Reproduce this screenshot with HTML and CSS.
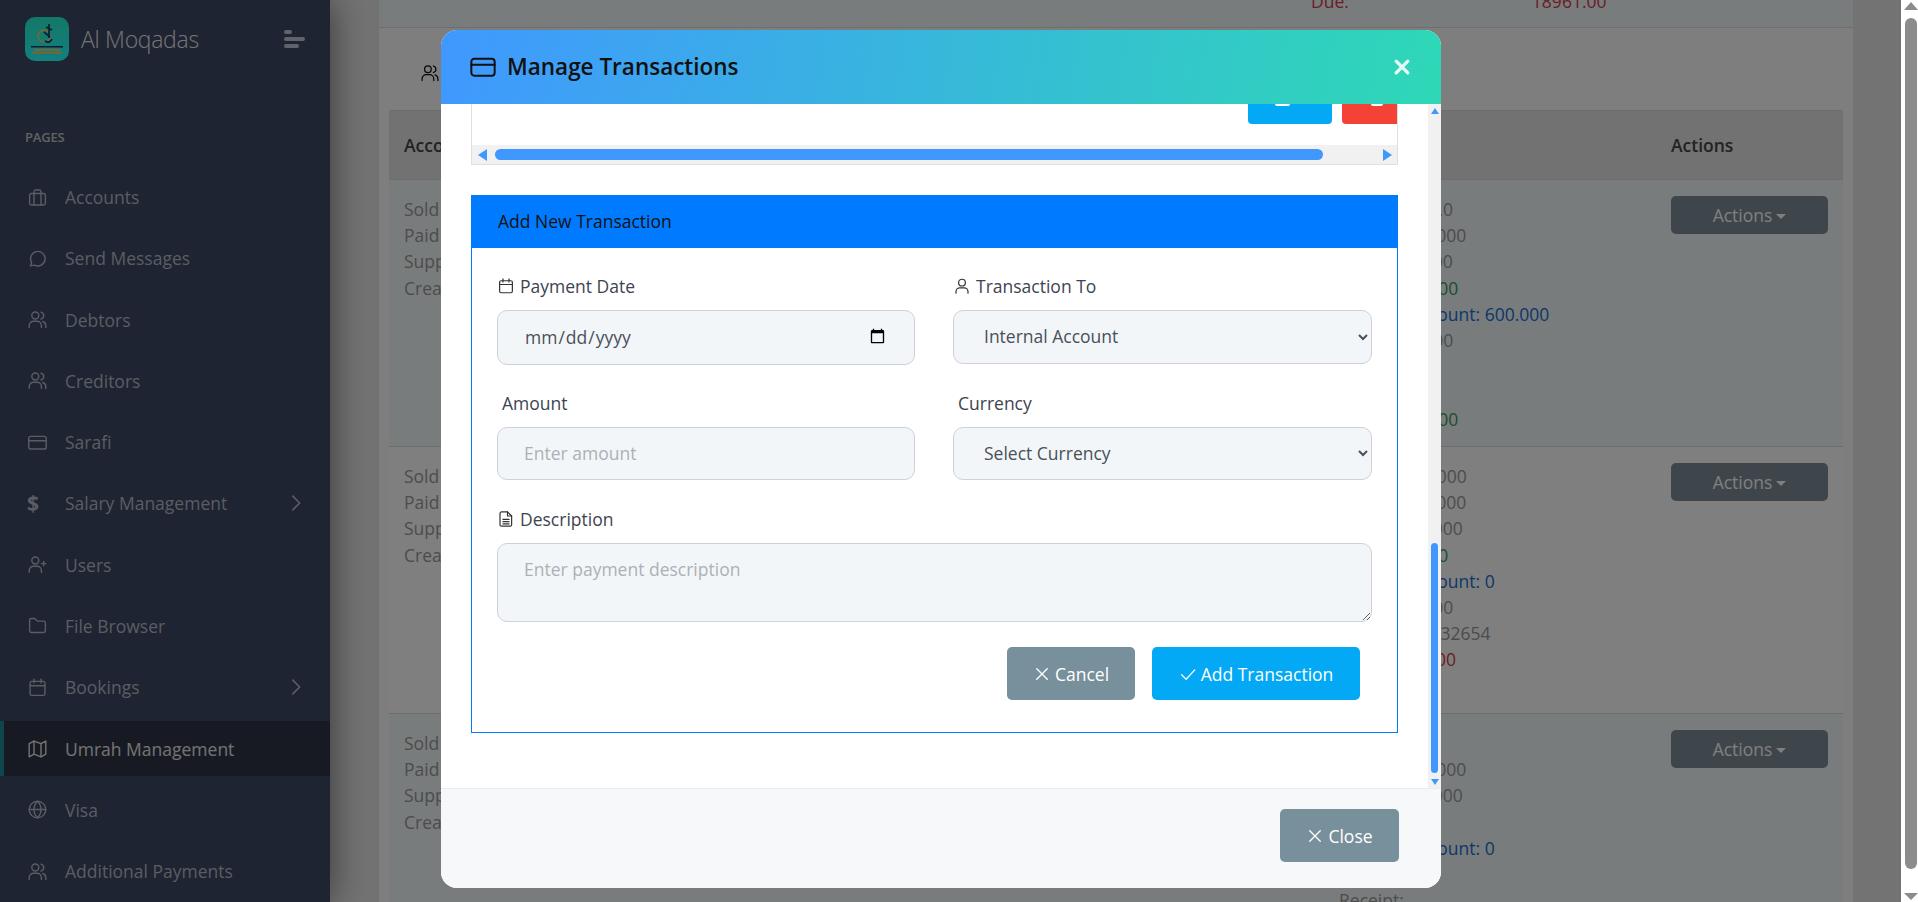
FILE: index.html
```html
<!DOCTYPE html>
<html lang="en">
<head>
  <meta charset="UTF-8">
  <title>Al Moqadas - Umrah Management</title>
  <link rel="stylesheet" href="styles.css">
</head>
<body>

  <!-- icon sprite -->
  <svg class="sprite" xmlns="http://www.w3.org/2000/svg">
    <defs>
      <symbol id="i-briefcase" viewBox="0 0 24 24"><rect x="3" y="7.5" width="18" height="13" rx="2"/><path d="M8 20.5V5.5a2 2 0 0 1 2-2h4a2 2 0 0 1 2 2v15"/></symbol>
      <symbol id="i-chat" viewBox="0 0 24 24"><path d="M4 20.5l1.3-4A8.3 8.3 0 1 1 8.6 19.6z"/></symbol>
      <symbol id="i-users" viewBox="0 0 24 24"><circle cx="9.5" cy="7.5" r="4"/><path d="M2.5 21v-2a5 5 0 0 1 5-5h4a5 5 0 0 1 5 5v2"/><path d="M16 3.6a4 4 0 0 1 0 7.8"/><path d="M21.5 21v-2a5 5 0 0 0-3.5-4.7"/></symbol>
      <symbol id="i-card" viewBox="0 0 24 24"><rect x="2" y="5" width="20" height="14.5" rx="2.5"/><path d="M2 10h20"/></symbol>
      <symbol id="i-user-plus" viewBox="0 0 24 24"><circle cx="9.5" cy="7.5" r="4"/><path d="M2.5 21v-2a5 5 0 0 1 5-5h4a5 5 0 0 1 5 5v2"/><path d="M19 8.500v5M16.500 11h5"/></symbol>
      <symbol id="i-folder" viewBox="0 0 24 24"><path d="M3 6a2 2 0 0 1 2-2h4l3 3h7a2 2 0 0 1 2 2v9a2 2 0 0 1-2 2H5a2 2 0 0 1-2-2z"/></symbol>
      <symbol id="i-calendar" viewBox="0 0 24 24"><rect x="3.500" y="5" width="17" height="16" rx="2"/><path d="M3.500 10h17M8 2.500v4M16 2.500v4"/></symbol>
      <symbol id="i-map" viewBox="0 0 24 24"><path d="M2.500 6.500l5.500-3 8 3 5.500-3v15l-5.500 3-8-3-5.500 3z"/><path d="M8 3.500v15M16 6.500v15"/></symbol>
      <symbol id="i-globe" viewBox="0 0 24 24"><circle cx="12" cy="12" r="9.500"/><path d="M2.500 12h19M12 2.500c3 3 4 6 4 9.500s-1 6.500-4 9.500c-3-3-4-6-4-9.500s1-6.500 4-9.500z"/></symbol>
      <symbol id="i-user" viewBox="0 0 24 24"><circle cx="12" cy="7.500" r="4.500"/><path d="M4 21.500v-2a5 5 0 0 1 5-5h6a5 5 0 0 1 5 5v2"/></symbol>
      <symbol id="i-file" viewBox="0 0 24 24"><path d="M6 2.500h8l5.500 5.500v11.500a2 2 0 0 1-2 2H6a2 2 0 0 1-2-2v-15a2 2 0 0 1 2-2z"/><path d="M14 2.500V8h5.500M8 12.500h8M8 15.500h8M8 18.500h8"/></symbol>
      <symbol id="i-x" viewBox="0 0 24 24"><path d="M5 5l14 14M19 5L5 19"/></symbol>
      <symbol id="i-check" viewBox="0 0 24 24"><path d="M3.500 13l6 6L21 6.500"/></symbol>
      <symbol id="i-chevron" viewBox="0 0 24 24"><path d="M8.500 4.500L16 12l-7.500 7.500"/></symbol>
    </defs>
  </svg>

  <div class="layout">
    <aside class="sidebar">
      <div class="brand">
        <svg class="logo" viewBox="0 0 44 44">
          <defs>
            <linearGradient id="logoBg" x1="0" y1="0" x2="0" y2="1">
              <stop offset="0" stop-color="#26f0cc"/>
              <stop offset="1" stop-color="#26ffff"/>
            </linearGradient>
          </defs>
          <rect width="44" height="44" rx="10" fill="url(#logoBg)"/>
          <circle cx="19" cy="19" r="6" fill="none" stroke="#ffc860" stroke-width="1.500"/>
          <path d="M24 7v14M21 10l6 3M19 15l6 5M20 24c3 2 6 1 7-2" stroke="#173a66" stroke-width="1.700" fill="none"/>
          <rect x="6" y="29" width="32" height="1.500" fill="#173a66"/>
          <rect x="9" y="32" width="26" height="2" fill="#ffc860"/>
          <rect x="7" y="35" width="30" height="1.500" fill="#ffc860"/>
        </svg>
        <span class="brand-name">Al Moqadas</span>
        <div class="toggler"><i class="bar-a"></i><i class="bar-b"></i><i class="bar-c"></i></div>
      </div>
      <div class="nav-title">PAGES</div>
      <nav class="nav">
        <a class="nav-item"><svg class="ico nav-ico"><use href="#i-briefcase"/></svg>Accounts</a>
        <a class="nav-item"><svg class="ico nav-ico"><use href="#i-chat"/></svg>Send Messages</a>
        <a class="nav-item"><svg class="ico nav-ico"><use href="#i-users"/></svg>Debtors</a>
        <a class="nav-item"><svg class="ico nav-ico"><use href="#i-users"/></svg>Creditors</a>
        <a class="nav-item"><svg class="ico nav-ico"><use href="#i-card"/></svg>Sarafi</a>
        <a class="nav-item"><span class="nav-ico dollar">$</span>Salary Management<svg class="ico chev"><use href="#i-chevron"/></svg></a>
        <a class="nav-item"><svg class="ico nav-ico"><use href="#i-user-plus"/></svg>Users</a>
        <a class="nav-item"><svg class="ico nav-ico"><use href="#i-folder"/></svg>File Browser</a>
        <a class="nav-item"><svg class="ico nav-ico"><use href="#i-calendar"/></svg>Bookings<svg class="ico chev"><use href="#i-chevron"/></svg></a>
        <a class="nav-item active"><svg class="ico nav-ico"><use href="#i-map"/></svg>Umrah Management</a>
        <a class="nav-item"><svg class="ico nav-ico"><use href="#i-globe"/></svg>Visa</a>
        <a class="nav-item"><svg class="ico nav-ico"><use href="#i-users"/></svg>Additional Payments</a>
      </nav>
    </aside>

    <main class="main">
      <div class="summary">
        <span class="due-label">Due:</span>
        <span class="due-value">18961.00</span>
      </div>
      <div class="panel">
        <div class="tabs"><svg class="ico tab-ico"><use href="#i-users"/></svg></div>
        <div class="tbl-head">
          <div class="col-a">Account</div>
          <div class="col-c">Actions</div>
        </div>

        <div class="tbl-row striped">
          <div class="col-a">Sold By: Ali<br>Paid By: Cash<br>Supplier: Ahmad<br>Created: 2024</div>
          <div class="col-b">
            <div>Price: 12000.0</div>
            <div>Sale: 12000.000</div>
            <div>Costs: 110000</div>
            <div class="green">Paid: 60000.00</div>
            <div class="blue">Pending Amount: 600.000</div>
            <div>Total: 1200.00</div>
            <div>&nbsp;</div>
            <div>&nbsp;</div>
            <div class="green">Paid: 60000.00</div>
          </div>
          <div class="col-c"><button class="btn-actions">Actions</button></div>
        </div>

        <div class="tbl-row">
          <div class="col-a">Sold By: Ali<br>Paid By: Cash<br>Supplier: Ahmad<br>Created: 2024</div>
          <div class="col-b">
            <div>Prices: 1200000</div>
            <div>Sale: 12000.000</div>
            <div>Costs: 1100000</div>
            <div class="green">Paid: 60000.0</div>
            <div class="blue">Pending Amount: 0</div>
            <div>Total: 1200.00</div>
            <div>Phone: 079332654</div>
            <div class="red">Due: 12000.00</div>
          </div>
          <div class="col-c"><button class="btn-actions">Actions</button></div>
        </div>

        <div class="tbl-row striped">
          <div class="col-a">Sold By: Ali<br>Paid By: Cash<br>Supplier: Ahmad<br>Created: 2024</div>
          <div class="col-b">
            <div>&nbsp;</div>
            <div>Sale: 12000.000</div>
            <div>Costs: 1100000</div>
            <div>&nbsp;</div>
            <div class="blue">Pending Amount: 0</div>
            <div>&nbsp;</div>
            <div>Receipt:</div>
          </div>
          <div class="col-c"><button class="btn-actions">Actions</button></div>
        </div>
      </div>
    </main>
  </div>

  <div class="backdrop"></div>

  <div class="page-scroll">
    <i class="arrow-up"></i>
    <div class="page-thumb"></div>
    <i class="arrow-down"></i>
  </div>

  <!-- Manage Transactions modal -->
  <div class="modal">
    <div class="modal-header">
      <svg class="ico title-ico"><use href="#i-card"/></svg>
      <h5 class="modal-title">Manage Transactions</h5>
      <svg class="ico modal-close"><use href="#i-x"/></svg>
    </div>

    <div class="modal-middle">
      <div class="modal-body">
        <div class="table-wrap">
          <div class="table-btns">
            <span class="mini-btn info"><i></i></span>
            <span class="mini-btn danger"><i></i></span>
          </div>
          <div class="hscroll">
            <i class="arrow-left"></i>
            <div class="hthumb"></div>
            <i class="arrow-right"></i>
          </div>
        </div>

        <div class="card">
          <div class="card-header">Add New Transaction</div>
          <form class="card-body">
            <div class="field row-one">
              <label><svg class="ico lbl-ico"><use href="#i-calendar"/></svg>Payment Date</label>
              <input class="control date-control" type="date">
            </div>
            <div class="field row-one">
              <label><svg class="ico lbl-ico"><use href="#i-user"/></svg>Transaction To</label>
              <select class="control"><option>Internal Account</option></select>
            </div>
            <div class="field">
              <label class="plain">Amount</label>
              <input class="control short" type="text" placeholder="Enter amount">
            </div>
            <div class="field">
              <label class="plain">Currency</label>
              <select class="control short"><option>Select Currency</option></select>
            </div>
            <div class="field wide">
              <label><svg class="ico lbl-ico"><use href="#i-file"/></svg>Description</label>
              <textarea class="control" placeholder="Enter payment description"></textarea>
            </div>
            <div class="form-actions">
              <button type="button" class="btn btn-grey"><svg class="ico btn-ico"><use href="#i-x"/></svg>Cancel</button>
              <button type="button" class="btn btn-cyan"><svg class="ico btn-ico"><use href="#i-check"/></svg>Add Transaction</button>
            </div>
          </form>
        </div>
      </div>

      <div class="modal-scroll">
        <i class="arrow-up"></i>
        <div class="modal-track"><div class="modal-thumb"></div></div>
        <i class="arrow-down"></i>
      </div>
    </div>

    <div class="modal-footer">
      <button type="button" class="btn btn-grey btn-close"><svg class="ico btn-ico"><use href="#i-x"/></svg>Close</button>
    </div>
  </div>

</body>
</html>
```

FILE: styles.css
```css
* {
  box-sizing: border-box;
}

html, body {
  margin: 0;
  height: 902px;
  overflow: hidden;
}

body {
  font-family: "Open Sans", sans-serif;
  font-size: 17.5px;
  color: #888;
  background: #e6e6e6;
  position: relative;
}

.sprite {
  width: 0;
  height: 0;
  position: absolute;
}

.ico {
  fill: none;
  stroke: currentColor;
  stroke-width: 1.6;
  stroke-linecap: round;
  stroke-linejoin: round;
  flex-shrink: 0;
}

/* ---- page behind the modal ---- */
.layout {
  display: flex;
  width: 1901px;
  height: 902px;
  overflow: hidden;
}

.sidebar {
  width: 330px;
  flex-shrink: 0;
  background: #3c4864;
  box-shadow: 0 0 35px rgba(0,0,0,0.55);
  position: relative;
  color: #b4bac6;
}

.brand {
  display: flex;
  align-items: center;
  height: 78px;
  padding: 0 25px;
}

.logo {
  width: 44px;
  height: 44px;
  margin-right: 12px;
}

.brand-name {
  font-weight: 300;
  font-size: 23px;
  letter-spacing: -0.3px;
  color: #e8e8e8;
  flex: 1;
}

.toggler {
  display: flex;
  flex-direction: column;
  gap: 3px;
  width: 21px;
}

.toggler i {
  display: block;
  height: 4px;
  border-radius: 2px;
  background: #c0c6d2;
}

.bar-a { width: 8px; }
.bar-b { width: 21px; }
.bar-c { width: 15px; }

.nav-title {
  margin: 50px 0 0 25px;
  font-size: 13px;
  line-height: 18px;
  font-weight: 600;
  letter-spacing: -0.2px;
  color: #c4c4c4;
}

.nav {
  display: flex;
  flex-direction: column;
  gap: 6px;
  margin-top: 23.500px;
}

.nav-item {
  display: flex;
  align-items: center;
  height: 55.27px;
  padding: 0 23px 0 27px;
}

.nav-ico {
  width: 21px;
  height: 21px;
  margin-right: 17px;
}

.dollar {
  font-weight: 700;
  font-size: 21px;
  line-height: 21px;
  text-align: left;
}

.chev {
  width: 22px;
  height: 22px;
  margin-left: auto;
  stroke-width: 1.8;
}

.nav-item.active {
  background: #2f3546;
  border-left: 4px solid #1e8c9c;
  padding-left: 23px;
  color: #e6e6e6;
}

.main {
  flex: 1;
  min-width: 0;
  padding: 0 48px 0 49px;
}

.summary {
  display: flex;
  align-items: flex-end;
  height: 28px;
  padding: 0 0 13px 932px;
  background: #f2f8fa;
  border-bottom: 1px solid #dcdcdc;
  line-height: 26px;
  color: #d63a4a;
}

.due-value {
  margin-left: 183px;
}

.panel {
  background: #fcfcfc;
  padding: 0 10px;
  height: 874px;
}

.tabs {
  height: 82px;
  padding: 35px 0 0 31px;
}

.tab-ico {
  width: 20px;
  height: 20px;
  color: #111;
  stroke-width: 1.5;
}

.tbl-head {
  display: flex;
  align-items: center;
  height: 70px;
  padding-left: 15px;
  background: #e4e4e4;
  border-top: 1px solid #dadada;
  border-bottom: 1px solid #dadada;
  color: #444;
  font-weight: 600;
}

.tbl-head .col-a {
  width: 1267px;
}

.tbl-row {
  display: flex;
  height: 267px;
  padding: 16px 15px 0;
  border-bottom: 1px solid #dadada;
  line-height: 26.2px;
  background: #fff;
  color: #999;
}

.tbl-row.striped {
  background: #f2f8fa;
}

.col-a {
  width: 935px;
}

.col-b {
  width: 332px;
  white-space: nowrap;
}

.green { color: #3e9a5a; }
.blue { color: #1a6fd0; }
.red { color: #d63a4a; }

.btn-actions {
  display: block;
  width: 157px;
  height: 38px;
  border: none;
  border-radius: 5px;
  background: #7c8c98;
  color: #fff;
  font: inherit;
}

.btn-actions::after {
  content: "";
  display: inline-block;
  margin-left: 4px;
  vertical-align: 3px;
  border-top: 5px solid #fff;
  border-left: 5px solid transparent;
  border-right: 5px solid transparent;
}

.backdrop {
  position: absolute;
  left: 0;
  top: 0;
  width: 1901px;
  height: 902px;
  background: rgba(0,0,0,0.5);
}

/* ---- fake scrollbars ---- */
.page-scroll {
  position: absolute;
  right: 0;
  top: 0;
  width: 17px;
  height: 902px;
  background: #fff;
  display: flex;
  flex-direction: column;
  align-items: center;
  padding: 2px 0 2px 3px;
}

.page-thumb {
  width: 12px;
  height: 851px;
  margin: 8px 0 24px;
  background: #8c8c8c;
  border-radius: 6px;
}

.page-scroll .arrow-up { border-bottom: 8px solid #8c8c8c; border-left: 7px solid transparent; border-right: 7px solid transparent; }
.page-scroll .arrow-down { border-top: 7px solid #8c8c8c; border-left: 7px solid transparent; border-right: 7px solid transparent; }

.arrow-up { border-bottom: 6px solid #4098ff; border-left: 4px solid transparent; border-right: 4px solid transparent; }
.arrow-down { border-top: 6px solid #4098ff; border-left: 4px solid transparent; border-right: 4px solid transparent; }
.arrow-left { border-right: 9px solid #4098ff; border-top: 6px solid transparent; border-bottom: 6px solid transparent; }
.arrow-right { border-left: 9px solid #4098ff; border-top: 6px solid transparent; border-bottom: 6px solid transparent; }

/* ---- modal ---- */
.modal {
  position: absolute;
  left: 441px;
  top: 30px;
  width: 1000px;
  height: 858px;
  background: #fff;
  border-radius: 16px;
  overflow: hidden;
  display: flex;
  flex-direction: column;
}

.modal-header {
  display: flex;
  align-items: center;
  height: 74px;
  flex-shrink: 0;
  padding: 0 29px 0 30px;
  background: linear-gradient(100deg, #4098ff, #2ed8b6);
  color: #111;
}

.title-ico {
  width: 28px;
  height: 28px;
  margin: 0 10px 0 -2px;
  stroke-width: 1.7;
}

.modal-title {
  margin: 0;
  flex: 1;
  font-size: 22.500px;
  font-weight: 600;
  line-height: 30px;
}

.modal-close {
  width: 20px;
  height: 20px;
  color: #e8fbf7;
  stroke-width: 4;
}

.modal-middle {
  flex: 1;
  min-height: 0;
  display: flex;
}

.modal-body {
  flex: 1;
  min-width: 0;
  padding: 0 30px;
}

.modal-scroll {
  width: 13px;
  background: #f1f1f1;
  display: flex;
  flex-direction: column;
  align-items: center;
  padding: 4px 0 3px;
}

.modal-track {
  flex: 1;
  width: 7px;
  margin-bottom: 6px;
  display: flex;
  flex-direction: column;
  justify-content: flex-end;
}

.modal-thumb {
  height: 230px;
  background: #4098ff;
  border-radius: 4px;
}

.table-wrap {
  height: 61px;
  border: 1px solid #e0e0e0;
  border-top: none;
  display: flex;
  flex-direction: column;
  overflow: hidden;
}

.table-btns {
  display: flex;
  justify-content: flex-end;
  gap: 10px;
  height: 41px;
}

.mini-btn {
  height: 20px;
  border-radius: 0 0 4px 4px;
  display: flex;
  justify-content: center;
}

.mini-btn i {
  height: 2px;
  background: #fff;
  border-radius: 0 0 2px 2px;
}

.mini-btn.info { width: 84px; background: #03a9f4; }
.mini-btn.info i { width: 15px; margin-right: 15px; }
.mini-btn.danger { width: 55px; background: #f44336; border-bottom-right-radius: 0; }
.mini-btn.danger i { width: 12px; margin-left: 15px; }

.hscroll {
  flex: 1;
  display: flex;
  align-items: center;
  padding: 0 5px 0 6px;
  background: #f1f1f1;
}

.hthumb {
  width: 828px;
  height: 11px;
  margin-left: 8px;
  border-radius: 6px;
  background: #4098ff;
}

.hscroll .arrow-right {
  margin-left: auto;
}

.card {
  margin-top: 30px;
  border: 1px solid #007bff;
  height: 538px;
}

.card-header {
  height: 52px;
  padding-left: 26px;
  line-height: 50px;
  background: #007bff;
  color: #111;
}

.card-body {
  display: grid;
  grid-template-columns: 418px 419px;
  column-gap: 38px;
  align-content: start;
  padding: 26px 25px 0;
}

.field {
  margin-bottom: 27px;
}

.field.row-one {
  margin-bottom: 26px;
}

.field label {
  display: flex;
  align-items: center;
  height: 24px;
  margin-bottom: 12px;
  color: #3d4450;
}

.field label.plain {
  padding-left: 5px;
}

.lbl-ico {
  width: 18px;
  height: 18px;
  margin-right: 5px;
  color: #333;
  stroke-width: 1.6;
}

.field.wide {
  grid-column: 1 / 3;
  margin-bottom: 0;
}

.control {
  display: block;
  width: 100%;
  height: 54px;
  padding: 0 26px 2px;
  border: 1px solid #ccd1db;
  border-radius: 10px;
  background: #f3f6f9;
  color: #495057;
  font-family: inherit;
  font-size: 17.5px;
  outline: none;
}

.control::placeholder {
  color: #adb0b5;
  opacity: 1;
}

.date-control {
  height: 55px;
}

.control.short {
  height: 53px;
}

textarea.control {
  height: 79px;
  padding-top: 13px;
  line-height: 24px;
  resize: vertical;
}

.form-actions {
  grid-column: 1 / 3;
  display: flex;
  justify-content: flex-end;
  gap: 17px;
  padding: 25px 12px 0 0;
}

.btn {
  display: inline-flex;
  align-items: center;
  justify-content: center;
  height: 53px;
  border: none;
  border-radius: 5px;
  color: #fff;
  font-family: inherit;
  font-size: 17.5px;
}

.btn-grey { background: #78909c; }
.btn-cyan { background: #03a9f4; }

.form-actions .btn-grey { width: 128px; }
.form-actions .btn-cyan { width: 208px; }

.btn-ico {
  width: 18px;
  height: 18px;
  margin-right: 4px;
  stroke-width: 1.8;
}

.modal-footer {
  height: 100px;
  flex-shrink: 0;
  display: flex;
  justify-content: flex-end;
  align-items: flex-start;
  padding: 20px 42px 0 0;
  background: #f7f8fa;
  border-top: 1px solid #e9ecef;
}

.btn-close {
  width: 119px;
}
```
